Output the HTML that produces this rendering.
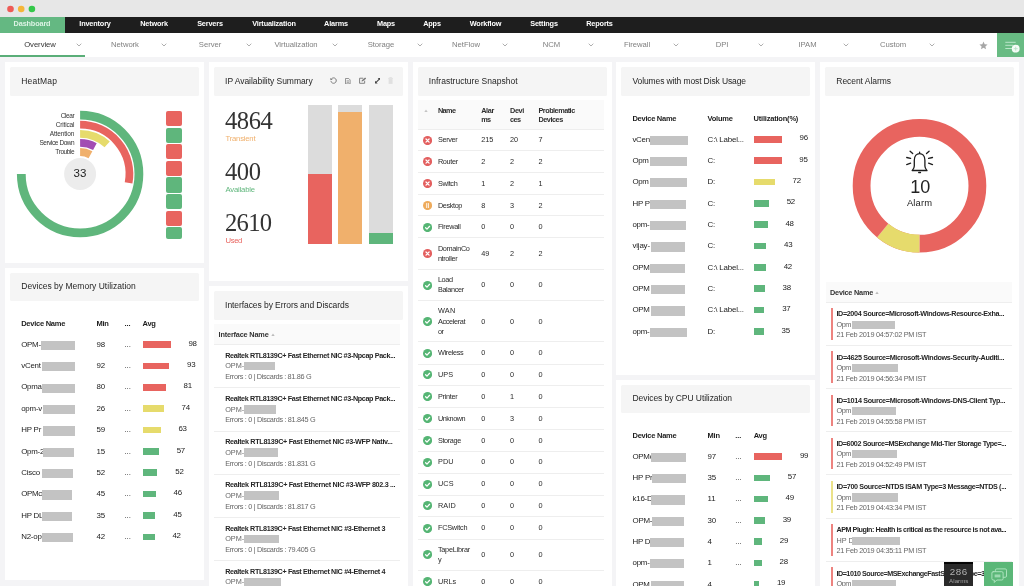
<!DOCTYPE html>
<html><head><meta charset="utf-8"><title>Dashboard</title>
<style>
html,body{margin:0;padding:0;}
body{width:1024px;height:586px;overflow:hidden;background:#f4f4f6;font-family:"Liberation Sans",sans-serif;position:relative;}
#r{position:absolute;left:0;top:0;width:1024px;height:586px;overflow:hidden;transform:translateZ(0);will-change:transform;}
#r div,#r span,#r svg{position:absolute;}
#r span{white-space:nowrap;line-height:1;}
</style></head><body><div id="r">
<div style="left:0px;top:0px;width:1024px;height:17px;background:#e7e7e7;"></div>
<svg style="left:0;top:0" width="50" height="17" viewBox="0 0 50 17"><circle cx="10.500" cy="9" r="3.300" fill="#ee5b56"/><circle cx="21.200" cy="9" r="3.300" fill="#f5b63a"/><circle cx="31.900" cy="9" r="3.300" fill="#35c84a"/></svg>
<div style="left:0px;top:17px;width:1024px;height:16px;background:#1e1e1e;"></div>
<div style="left:0px;top:17px;width:65px;height:16px;background:#64b882;"></div>
<span class="nv" style="left:-8px;top:20.3px;width:80px;text-align:center;font-size:7.3px;color:#dcf3e4;font-weight:bold;letter-spacing:-0.15px">Dashboard</span>
<span class="nv" style="left:55px;top:20.3px;width:80px;text-align:center;font-size:7.3px;color:#fff;font-weight:bold;letter-spacing:-0.15px">Inventory</span>
<span class="nv" style="left:114px;top:20.3px;width:80px;text-align:center;font-size:7.3px;color:#fff;font-weight:bold;letter-spacing:-0.15px">Network</span>
<span class="nv" style="left:170px;top:20.3px;width:80px;text-align:center;font-size:7.3px;color:#fff;font-weight:bold;letter-spacing:-0.15px">Servers</span>
<span class="nv" style="left:234px;top:20.3px;width:80px;text-align:center;font-size:7.3px;color:#fff;font-weight:bold;letter-spacing:-0.15px">Virtualization</span>
<span class="nv" style="left:296px;top:20.3px;width:80px;text-align:center;font-size:7.3px;color:#fff;font-weight:bold;letter-spacing:-0.15px">Alarms</span>
<span class="nv" style="left:346px;top:20.3px;width:80px;text-align:center;font-size:7.3px;color:#fff;font-weight:bold;letter-spacing:-0.15px">Maps</span>
<span class="nv" style="left:392px;top:20.3px;width:80px;text-align:center;font-size:7.3px;color:#fff;font-weight:bold;letter-spacing:-0.15px">Apps</span>
<span class="nv" style="left:445.5px;top:20.3px;width:80px;text-align:center;font-size:7.3px;color:#fff;font-weight:bold;letter-spacing:-0.15px">Workflow</span>
<span class="nv" style="left:504px;top:20.3px;width:80px;text-align:center;font-size:7.3px;color:#fff;font-weight:bold;letter-spacing:-0.15px">Settings</span>
<span class="nv" style="left:559.5px;top:20.3px;width:80px;text-align:center;font-size:7.3px;color:#fff;font-weight:bold;letter-spacing:-0.15px">Reports</span>
<div style="left:0px;top:33px;width:1024px;height:24px;background:#ffffff;"></div>
<div style="left:0px;top:55px;width:85px;height:2px;background:#5aae78;"></div>
<span style="left:0px;top:40.8px;width:80px;text-align:center;font-size:7.7px;color:#333;letter-spacing:-0.05px">Overview</span>
<svg style="left:76px;top:43px" width="6" height="4" viewBox="0 0 6 4"><path d="M0.7 0.7 L3 3 L5.3 0.7" fill="none" stroke="#999" stroke-width="0.8"/></svg>
<span style="left:85px;top:40.8px;width:80px;text-align:center;font-size:7.7px;color:#808080;letter-spacing:-0.05px">Network</span>
<svg style="left:161px;top:43px" width="6" height="4" viewBox="0 0 6 4"><path d="M0.7 0.7 L3 3 L5.3 0.7" fill="none" stroke="#999" stroke-width="0.8"/></svg>
<span style="left:170px;top:40.8px;width:80px;text-align:center;font-size:7.7px;color:#808080;letter-spacing:-0.05px">Server</span>
<svg style="left:246px;top:43px" width="6" height="4" viewBox="0 0 6 4"><path d="M0.7 0.7 L3 3 L5.3 0.7" fill="none" stroke="#999" stroke-width="0.8"/></svg>
<span style="left:256px;top:40.8px;width:80px;text-align:center;font-size:7.7px;color:#808080;letter-spacing:-0.05px">Virtualization</span>
<svg style="left:332px;top:43px" width="6" height="4" viewBox="0 0 6 4"><path d="M0.7 0.7 L3 3 L5.3 0.7" fill="none" stroke="#999" stroke-width="0.8"/></svg>
<span style="left:341px;top:40.8px;width:80px;text-align:center;font-size:7.7px;color:#808080;letter-spacing:-0.05px">Storage</span>
<svg style="left:417px;top:43px" width="6" height="4" viewBox="0 0 6 4"><path d="M0.7 0.7 L3 3 L5.3 0.7" fill="none" stroke="#999" stroke-width="0.8"/></svg>
<span style="left:426px;top:40.8px;width:80px;text-align:center;font-size:7.7px;color:#808080;letter-spacing:-0.05px">NetFlow</span>
<svg style="left:502px;top:43px" width="6" height="4" viewBox="0 0 6 4"><path d="M0.7 0.7 L3 3 L5.3 0.7" fill="none" stroke="#999" stroke-width="0.8"/></svg>
<span style="left:511.5px;top:40.8px;width:80px;text-align:center;font-size:7.7px;color:#808080;letter-spacing:-0.05px">NCM</span>
<svg style="left:587.5px;top:43px" width="6" height="4" viewBox="0 0 6 4"><path d="M0.7 0.7 L3 3 L5.3 0.7" fill="none" stroke="#999" stroke-width="0.8"/></svg>
<span style="left:597px;top:40.8px;width:80px;text-align:center;font-size:7.7px;color:#808080;letter-spacing:-0.05px">Firewall</span>
<svg style="left:673px;top:43px" width="6" height="4" viewBox="0 0 6 4"><path d="M0.7 0.7 L3 3 L5.3 0.7" fill="none" stroke="#999" stroke-width="0.8"/></svg>
<span style="left:682px;top:40.8px;width:80px;text-align:center;font-size:7.7px;color:#808080;letter-spacing:-0.05px">DPI</span>
<svg style="left:758px;top:43px" width="6" height="4" viewBox="0 0 6 4"><path d="M0.7 0.7 L3 3 L5.3 0.7" fill="none" stroke="#999" stroke-width="0.8"/></svg>
<span style="left:767.5px;top:40.8px;width:80px;text-align:center;font-size:7.7px;color:#808080;letter-spacing:-0.05px">IPAM</span>
<svg style="left:843px;top:43px" width="6" height="4" viewBox="0 0 6 4"><path d="M0.7 0.7 L3 3 L5.3 0.7" fill="none" stroke="#999" stroke-width="0.8"/></svg>
<span style="left:853px;top:40.8px;width:80px;text-align:center;font-size:7.7px;color:#808080;letter-spacing:-0.05px">Custom</span>
<svg style="left:929px;top:43px" width="6" height="4" viewBox="0 0 6 4"><path d="M0.7 0.7 L3 3 L5.3 0.7" fill="none" stroke="#999" stroke-width="0.8"/></svg>
<svg style="left:979.3px;top:40.8px" width="9" height="9" viewBox="0 0 24 24"><path fill="#a6a6a6" d="M12 1.500l3.100 7.200 7.800.700-5.900 5.200 1.800 7.600L12 18.100l-6.800 4.100 1.800-7.600L1.100 9.400l7.800-.7z"/></svg>
<div style="left:997.3px;top:33px;width:26.7px;height:24px;background:#68bb83;"></div>
<svg style="left:1003px;top:39px" width="18" height="15" viewBox="1003 39 18 15"><path d="M1005.300 42.300H1015.700M1005.300 45.300H1013M1005.300 48.500H1012" stroke="#c4ebd1" stroke-width="0.9" fill="none"/><circle cx="1015.700" cy="48.700" r="3.900" fill="#f4fbf6"/><path d="M1015.700 46.700v4M1013.700 48.700h4" stroke="#b9e2c6" stroke-width="0.9"/></svg>
<div style="left:5px;top:62px;width:199px;height:200.5px;background:#fff;"></div>
<div style="left:10px;top:67px;width:189px;height:28.6px;background:#f5f5f5;border-radius:1.5px"></div>
<span style="left:21.30px;top:76.8px;font-size:8.5px;color:#1f1f1f;letter-spacing:0.180px;">HeatMap</span>
<div style="left:5px;top:267.5px;width:199px;height:312.3px;background:#fff;"></div>
<div style="left:10px;top:272.5px;width:189px;height:28.6px;background:#f5f5f5;border-radius:1.5px"></div>
<span style="left:21.30px;top:282.3px;font-size:8.5px;color:#1f1f1f;letter-spacing:0.023px;">Devices by Memory Utilization</span>
<div style="left:208.8px;top:62px;width:199.2px;height:219px;background:#fff;"></div>
<div style="left:213.8px;top:67px;width:189.2px;height:28.6px;background:#f5f5f5;border-radius:1.5px"></div>
<span style="left:225.10px;top:76.8px;font-size:8.5px;color:#1f1f1f;letter-spacing:-0.043px;">IP Availability Summary</span>
<div style="left:208.8px;top:286px;width:199.2px;height:310px;background:#fff;"></div>
<div style="left:213.8px;top:291px;width:189.2px;height:28.6px;background:#f5f5f5;border-radius:1.5px"></div>
<span style="left:225.10px;top:300.8px;font-size:8.5px;color:#1f1f1f;letter-spacing:-0.072px;">Interfaces by Errors and Discards</span>
<div style="left:412.5px;top:62px;width:199.3px;height:530px;background:#fff;"></div>
<div style="left:417.5px;top:67px;width:189.3px;height:28.6px;background:#f5f5f5;border-radius:1.5px"></div>
<span style="left:428.80px;top:76.8px;font-size:8.5px;color:#1f1f1f;letter-spacing:0.018px;">Infrastructure Snapshot</span>
<div style="left:616.2px;top:62px;width:199.3px;height:312.5px;background:#fff;"></div>
<div style="left:621.2px;top:67px;width:189.3px;height:28.6px;background:#f5f5f5;border-radius:1.5px"></div>
<span style="left:632.50px;top:76.8px;font-size:8.5px;color:#1f1f1f;letter-spacing:-0.117px;">Volumes with most Disk Usage</span>
<div style="left:616.2px;top:379.5px;width:199.3px;height:220px;background:#fff;"></div>
<div style="left:621.2px;top:384.5px;width:189.3px;height:28.6px;background:#f5f5f5;border-radius:1.5px"></div>
<span style="left:632.50px;top:394.3px;font-size:8.5px;color:#1f1f1f;letter-spacing:-0.061px;">Devices by CPU Utilization</span>
<div style="left:820px;top:62px;width:199.3px;height:530px;background:#fff;"></div>
<div style="left:825px;top:67px;width:189.3px;height:28.6px;background:#f5f5f5;border-radius:1.5px"></div>
<span style="left:836.30px;top:76.8px;font-size:8.5px;color:#1f1f1f;letter-spacing:-0.051px;">Recent Alarms</span>
<svg style="left:0;top:100px" width="204" height="160" viewBox="0 100 204 160"><path d="M80.1 115.2 A58.8 58.8 0 1 1 21.30 174.00" fill="none" stroke="#5fb67c" stroke-width="8.8"/><path d="M80.1 124.7 A49.3 49.3 0 0 1 128.59 182.90" fill="none" stroke="#e8645f" stroke-width="7.8"/><path d="M80.1 133.9 A40.1 40.1 0 0 1 107.19 144.44" fill="none" stroke="#e6db6c" stroke-width="7.8"/><path d="M80.1 142.9 A31.1 31.1 0 0 1 94.89 146.64" fill="none" stroke="#a24db3" stroke-width="7.6"/><path d="M80.1 152.1 A21.9 21.9 0 0 1 90.48 154.72" fill="none" stroke="#f0b06c" stroke-width="8"/><circle cx="80.1" cy="174" r="16" fill="#ececec"/></svg>
<span style="left:73.60px;top:168.4px;font-size:11.5px;color:#222;letter-spacing:0.105px;">33</span>
<span style="left:60.80px;top:112.6px;font-size:6.5px;color:#333;letter-spacing:-0.406px;">Clear</span>
<span style="left:55.80px;top:121.75px;font-size:6.5px;color:#333;letter-spacing:-0.170px;">Critical</span>
<span style="left:49.70px;top:130.9px;font-size:6.5px;color:#333;letter-spacing:-0.117px;">Attention</span>
<span style="left:39.40px;top:140.05px;font-size:6.5px;color:#333;letter-spacing:-0.433px;">Service Down</span>
<span style="left:55.30px;top:149.2px;font-size:6.5px;color:#333;letter-spacing:-0.399px;">Trouble</span>
<div style="left:165.9px;top:111.00px;width:16.1px;height:15.2px;border-radius:2px;background:#e8645f"></div>
<div style="left:165.9px;top:127.62px;width:16.1px;height:15.2px;border-radius:2px;background:#5fb67c"></div>
<div style="left:165.9px;top:144.24px;width:16.1px;height:15.2px;border-radius:2px;background:#e8645f"></div>
<div style="left:165.9px;top:160.86px;width:16.1px;height:15.2px;border-radius:2px;background:#e8645f"></div>
<div style="left:165.9px;top:177.48px;width:16.1px;height:15.2px;border-radius:2px;background:#5fb67c"></div>
<div style="left:165.9px;top:194.10px;width:16.1px;height:15.2px;border-radius:2px;background:#5fb67c"></div>
<div style="left:165.9px;top:210.72px;width:16.1px;height:15.2px;border-radius:2px;background:#e8645f"></div>
<div style="left:165.9px;top:227.34px;width:16.1px;height:11.3px;border-radius:2px;background:#5fb67c"></div>
<div style="left:307.8px;top:105px;width:24.2px;height:139px;background:#dcdcdc;"></div>
<div style="left:307.8px;top:173.6px;width:24.2px;height:70.4px;background:#e8645f;"></div>
<div style="left:338px;top:105px;width:24.2px;height:139px;background:#dcdcdc;"></div>
<div style="left:338px;top:112px;width:24.2px;height:132px;background:#f0b06c;"></div>
<div style="left:368.8px;top:105px;width:24.2px;height:139px;background:#dcdcdc;"></div>
<div style="left:368.8px;top:233px;width:24.2px;height:11px;background:#5fb67c;"></div>
<span style="left:225.00px;top:108.5px;font-size:24.6px;color:#333;letter-spacing:-0.450px;font-family:'Liberation Serif',serif;">4864</span>
<span style="left:225.50px;top:134.6px;font-size:7.7px;color:#f0b06c;letter-spacing:-0.212px;">Transient</span>
<span style="left:225.00px;top:159.5px;font-size:24.6px;color:#333;letter-spacing:-0.467px;font-family:'Liberation Serif',serif;">400</span>
<span style="left:225.50px;top:185.6px;font-size:7.7px;color:#5fb67c;letter-spacing:-0.190px;">Available</span>
<span style="left:225.00px;top:210.5px;font-size:24.6px;color:#333;letter-spacing:-0.700px;font-family:'Liberation Serif',serif;">2610</span>
<span style="left:225.50px;top:236.6px;font-size:7.7px;color:#e8645f;letter-spacing:-0.369px;">Used</span>
<svg style="left:329.8px;top:77.4px" width="7.2" height="7.2" viewBox="0 0 8 8"><path d="M1.500 2.300 A3 3 0 1 1 1.050 4.600" fill="none" stroke="#7a7a7a" stroke-width="1.1"/><path d="M0.200 1 L0.500 3.600 L3 2.900z" fill="#7a7a7a"/></svg>
<svg style="left:345.2px;top:77.800px" width="5.6" height="6.4" viewBox="0 0 7 8"><path d="M0.600 0.600 H4.600 L6.400 2.400 V7.400 H0.600z" fill="none" stroke="#7a7a7a" stroke-width="1"/><path d="M2 3.600 H5 M2 5.400 H5" stroke="#7a7a7a" stroke-width="0.9"/></svg>
<svg style="left:358.8px;top:77.300px" width="7.6" height="7" viewBox="0 0 9 8"><path d="M5 1.300 H0.700 V7.300 H6.700 V4.200" fill="none" stroke="#7a7a7a" stroke-width="1.1"/><path d="M3 5.300 L3.300 3.700 L7.200 0.300 L8.500 1.700 L4.600 5z" fill="#7a7a7a"/></svg>
<svg style="left:374.6px;top:78.300px" width="5.4" height="5.4" viewBox="0 0 6 6"><path d="M3 0 H6 V3z M0 3 V6 H3z" fill="#444"/><path d="M1.200 4.800 L4.800 1.200" stroke="#444" stroke-width="1.2"/></svg>
<svg style="left:388.2px;top:77.300px" width="5.2" height="7.2" viewBox="0 0 6 8"><path d="M0.200 1.500 H5.800 M2 1.300 V0.400 H4 V1.300" stroke="#dcdcdc" stroke-width="0.9" fill="none"/><path d="M0.700 2.200 H5.300 V7.800 H0.700z" fill="#e0e0e0"/></svg>
<span style="left:21.20px;top:319.90000000000003px;font-size:7.5px;color:#1c1c1c;letter-spacing:-0.255px;font-weight:bold;">Device Name</span>
<span style="left:96.50px;top:319.90000000000003px;font-size:7.5px;color:#1c1c1c;letter-spacing:-0.258px;font-weight:bold;">Min</span>
<span style="left:124.50px;top:319.90000000000003px;font-size:7.5px;color:#1c1c1c;letter-spacing:-0.125px;font-weight:bold;">...</span>
<span style="left:142.60px;top:319.90000000000003px;font-size:7.5px;color:#1c1c1c;letter-spacing:-0.278px;font-weight:bold;">Avg</span>
<span style="left:21.20px;top:340.70000000000005px;font-size:7.9px;color:#222;letter-spacing:-0.258px;">OPM-</span>
<div style="left:41.3px;top:340.8px;width:34.2px;height:9.2px;background:#c3c3c3;"></div>
<span style="left:96.50px;top:340.70000000000005px;font-size:7.9px;color:#222;letter-spacing:-0.220px;">98</span>
<span style="left:124.50px;top:340.70000000000005px;font-size:7.9px;color:#222;letter-spacing:-0.110px;">...</span>
<div style="left:142.6px;top:341.20000000000005px;width:27.9986px;height:6.6px;background:#e8645f;"></div>
<span style="left:188.40px;top:339.6px;font-size:7.9px;color:#222;letter-spacing:-0.220px;">98</span>
<span style="left:21.20px;top:362.08000000000004px;font-size:7.9px;color:#222;letter-spacing:-0.206px;">vCent</span>
<div style="left:41.8px;top:362.18px;width:33.2px;height:9.2px;background:#c3c3c3;"></div>
<span style="left:96.50px;top:362.08000000000004px;font-size:7.9px;color:#222;letter-spacing:-0.220px;">92</span>
<span style="left:124.50px;top:362.08000000000004px;font-size:7.9px;color:#222;letter-spacing:-0.110px;">...</span>
<div style="left:142.6px;top:362.58000000000004px;width:26.5701px;height:6.6px;background:#e8645f;"></div>
<span style="left:186.97px;top:360.98px;font-size:7.9px;color:#222;letter-spacing:-0.220px;">93</span>
<span style="left:21.20px;top:383.46000000000004px;font-size:7.9px;color:#222;letter-spacing:-0.269px;">Opma</span>
<div style="left:41.8px;top:383.56px;width:33.2px;height:9.2px;background:#c3c3c3;"></div>
<span style="left:96.50px;top:383.46000000000004px;font-size:7.9px;color:#222;letter-spacing:-0.220px;">80</span>
<span style="left:124.50px;top:383.46000000000004px;font-size:7.9px;color:#222;letter-spacing:-0.110px;">...</span>
<div style="left:142.6px;top:383.96000000000004px;width:23.1417px;height:6.6px;background:#e8645f;"></div>
<span style="left:183.54px;top:382.36px;font-size:7.9px;color:#222;letter-spacing:-0.220px;">81</span>
<span style="left:21.20px;top:404.84000000000003px;font-size:7.9px;color:#222;letter-spacing:-0.219px;">opm-v</span>
<div style="left:42.5px;top:404.94px;width:32.0px;height:9.2px;background:#c3c3c3;"></div>
<span style="left:96.50px;top:404.84000000000003px;font-size:7.9px;color:#222;letter-spacing:-0.220px;">26</span>
<span style="left:124.50px;top:404.84000000000003px;font-size:7.9px;color:#222;letter-spacing:-0.110px;">...</span>
<div style="left:142.6px;top:405.34000000000003px;width:21.1418px;height:6.6px;background:#e6db6c;"></div>
<span style="left:181.54px;top:403.74px;font-size:7.9px;color:#222;letter-spacing:-0.220px;">74</span>
<span style="left:21.20px;top:426.22px;font-size:7.9px;color:#222;letter-spacing:-0.209px;">HP Pr</span>
<div style="left:42.5px;top:426.32px;width:32.0px;height:9.2px;background:#c3c3c3;"></div>
<span style="left:96.50px;top:426.22px;font-size:7.9px;color:#222;letter-spacing:-0.220px;">59</span>
<span style="left:124.50px;top:426.22px;font-size:7.9px;color:#222;letter-spacing:-0.110px;">...</span>
<div style="left:142.6px;top:426.72px;width:17.999100000000002px;height:6.6px;background:#e6db6c;"></div>
<span style="left:178.40px;top:425.12px;font-size:7.9px;color:#222;letter-spacing:-0.220px;">63</span>
<span style="left:21.20px;top:447.6px;font-size:7.9px;color:#222;letter-spacing:-0.241px;">Opm-2</span>
<div style="left:42.8px;top:447.7px;width:31.0px;height:9.2px;background:#c3c3c3;"></div>
<span style="left:96.50px;top:447.6px;font-size:7.9px;color:#222;letter-spacing:-0.220px;">15</span>
<span style="left:124.50px;top:447.6px;font-size:7.9px;color:#222;letter-spacing:-0.110px;">...</span>
<div style="left:142.6px;top:448.1px;width:16.2849px;height:6.6px;background:#5fb67c;"></div>
<span style="left:176.68px;top:446.5px;font-size:7.9px;color:#222;letter-spacing:-0.220px;">57</span>
<span style="left:21.20px;top:468.98px;font-size:7.9px;color:#222;letter-spacing:-0.183px;">Cisco </span>
<div style="left:41.6px;top:469.08px;width:31.699999999999996px;height:9.2px;background:#c3c3c3;"></div>
<span style="left:96.50px;top:468.98px;font-size:7.9px;color:#222;letter-spacing:-0.220px;">52</span>
<span style="left:124.50px;top:468.98px;font-size:7.9px;color:#222;letter-spacing:-0.110px;">...</span>
<div style="left:142.6px;top:469.48px;width:14.8564px;height:6.6px;background:#5fb67c;"></div>
<span style="left:175.26px;top:467.88px;font-size:7.9px;color:#222;letter-spacing:-0.220px;">52</span>
<span style="left:21.20px;top:490.36px;font-size:7.9px;color:#222;letter-spacing:-0.274px;">OPMc</span>
<div style="left:41.6px;top:490.46px;width:30.499999999999993px;height:9.2px;background:#c3c3c3;"></div>
<span style="left:96.50px;top:490.36px;font-size:7.9px;color:#222;letter-spacing:-0.220px;">45</span>
<span style="left:124.50px;top:490.36px;font-size:7.9px;color:#222;letter-spacing:-0.110px;">...</span>
<div style="left:142.6px;top:490.86px;width:13.1422px;height:6.6px;background:#5fb67c;"></div>
<span style="left:173.54px;top:489.26px;font-size:7.9px;color:#222;letter-spacing:-0.220px;">46</span>
<span style="left:21.20px;top:511.74px;font-size:7.9px;color:#222;letter-spacing:-0.231px;">HP DL</span>
<div style="left:41.6px;top:511.84px;width:30.300000000000004px;height:9.2px;background:#c3c3c3;"></div>
<span style="left:96.50px;top:511.74px;font-size:7.9px;color:#222;letter-spacing:-0.220px;">35</span>
<span style="left:124.50px;top:511.74px;font-size:7.9px;color:#222;letter-spacing:-0.110px;">...</span>
<div style="left:142.6px;top:512.24px;width:12.8565px;height:6.6px;background:#5fb67c;"></div>
<span style="left:173.26px;top:510.64px;font-size:7.9px;color:#222;letter-spacing:-0.220px;">45</span>
<span style="left:21.20px;top:533.12px;font-size:7.9px;color:#222;letter-spacing:-0.215px;">N2-op</span>
<div style="left:41.6px;top:533.22px;width:31.300000000000004px;height:9.2px;background:#c3c3c3;"></div>
<span style="left:96.50px;top:533.12px;font-size:7.9px;color:#222;letter-spacing:-0.220px;">42</span>
<span style="left:124.50px;top:533.12px;font-size:7.9px;color:#222;letter-spacing:-0.110px;">...</span>
<div style="left:142.6px;top:533.62px;width:11.9994px;height:6.6px;background:#5fb67c;"></div>
<span style="left:172.40px;top:532.02px;font-size:7.9px;color:#222;letter-spacing:-0.220px;">42</span>
<span style="left:632.40px;top:114.7px;font-size:7.5px;color:#1c1c1c;letter-spacing:-0.255px;font-weight:bold;">Device Name</span>
<span style="left:707.60px;top:114.7px;font-size:7.5px;color:#1c1c1c;letter-spacing:-0.265px;font-weight:bold;">Volume</span>
<span style="left:753.50px;top:114.7px;font-size:7.5px;color:#1c1c1c;letter-spacing:-0.204px;font-weight:bold;">Utilization(%)</span>
<span style="left:632.40px;top:135.5px;font-size:7.9px;color:#222;letter-spacing:-0.231px;">vCen</span>
<div style="left:649.5px;top:135.6px;width:38.200000000000045px;height:9.2px;background:#c3c3c3;"></div>
<span style="left:707.60px;top:135.5px;font-size:7.9px;color:#222;letter-spacing:-0.159px;">C:\ Label...</span>
<div style="left:753.5px;top:136.0px;width:28.32px;height:6.6px;background:#e8645f;"></div>
<span style="left:799.62px;top:134.4px;font-size:7.9px;color:#222;letter-spacing:-0.220px;">96</span>
<span style="left:632.40px;top:156.85px;font-size:7.9px;color:#222;letter-spacing:-0.285px;">Opm</span>
<div style="left:649.5px;top:156.95px;width:37.5px;height:9.2px;background:#c3c3c3;"></div>
<span style="left:707.60px;top:156.85px;font-size:7.9px;color:#222;letter-spacing:-0.198px;">C:</span>
<div style="left:753.5px;top:157.35px;width:28.025px;height:6.6px;background:#e8645f;"></div>
<span style="left:799.32px;top:155.75px;font-size:7.9px;color:#222;letter-spacing:-0.220px;">95</span>
<span style="left:632.40px;top:178.20000000000002px;font-size:7.9px;color:#222;letter-spacing:-0.285px;">Opm</span>
<div style="left:649.5px;top:178.3px;width:37.5px;height:9.2px;background:#c3c3c3;"></div>
<span style="left:707.60px;top:178.20000000000002px;font-size:7.9px;color:#222;letter-spacing:-0.198px;">D:</span>
<div style="left:753.5px;top:178.70000000000002px;width:21.24px;height:6.6px;background:#e6db6c;"></div>
<span style="left:792.54px;top:177.10000000000002px;font-size:7.9px;color:#222;letter-spacing:-0.220px;">72</span>
<span style="left:632.40px;top:199.55px;font-size:7.9px;color:#222;letter-spacing:-0.201px;">HP Pi</span>
<div style="left:650.2px;top:199.65px;width:36.299999999999955px;height:9.2px;background:#c3c3c3;"></div>
<span style="left:707.60px;top:199.55px;font-size:7.9px;color:#222;letter-spacing:-0.198px;">C:</span>
<div style="left:753.5px;top:200.05px;width:15.34px;height:6.6px;background:#5fb67c;"></div>
<span style="left:786.64px;top:198.45000000000002px;font-size:7.9px;color:#222;letter-spacing:-0.220px;">52</span>
<span style="left:632.40px;top:220.9px;font-size:7.9px;color:#222;letter-spacing:-0.225px;">opm-</span>
<div style="left:649.5px;top:221.0px;width:36.299999999999955px;height:9.2px;background:#c3c3c3;"></div>
<span style="left:707.60px;top:220.9px;font-size:7.9px;color:#222;letter-spacing:-0.198px;">C:</span>
<div style="left:753.5px;top:221.4px;width:14.16px;height:6.6px;background:#5fb67c;"></div>
<span style="left:785.46px;top:219.8px;font-size:7.9px;color:#222;letter-spacing:-0.220px;">48</span>
<span style="left:632.40px;top:242.25px;font-size:7.9px;color:#222;letter-spacing:-0.154px;">vijay-</span>
<div style="left:650.6px;top:242.35px;width:34.69999999999993px;height:9.2px;background:#c3c3c3;"></div>
<span style="left:707.60px;top:242.25px;font-size:7.9px;color:#222;letter-spacing:-0.198px;">C:</span>
<div style="left:753.5px;top:242.75px;width:12.684999999999999px;height:6.6px;background:#5fb67c;"></div>
<span style="left:783.98px;top:241.15px;font-size:7.9px;color:#222;letter-spacing:-0.220px;">43</span>
<span style="left:632.40px;top:263.6px;font-size:7.9px;color:#222;letter-spacing:-0.300px;">OPM</span>
<div style="left:650px;top:263.7px;width:35.299999999999955px;height:9.2px;background:#c3c3c3;"></div>
<span style="left:707.60px;top:263.6px;font-size:7.9px;color:#222;letter-spacing:-0.159px;">C:\ Label...</span>
<div style="left:753.5px;top:264.1px;width:12.389999999999999px;height:6.6px;background:#5fb67c;"></div>
<span style="left:783.69px;top:262.5px;font-size:7.9px;color:#222;letter-spacing:-0.220px;">42</span>
<span style="left:632.40px;top:284.95000000000005px;font-size:7.9px;color:#222;letter-spacing:-0.300px;">OPM</span>
<div style="left:650.6px;top:285.05px;width:34.69999999999993px;height:9.2px;background:#c3c3c3;"></div>
<span style="left:707.60px;top:284.95000000000005px;font-size:7.9px;color:#222;letter-spacing:-0.198px;">C:</span>
<div style="left:753.5px;top:285.45000000000005px;width:11.209999999999999px;height:6.6px;background:#5fb67c;"></div>
<span style="left:782.51px;top:283.85px;font-size:7.9px;color:#222;letter-spacing:-0.220px;">38</span>
<span style="left:632.40px;top:306.30000000000007px;font-size:7.9px;color:#222;letter-spacing:-0.300px;">OPM</span>
<div style="left:650.6px;top:306.40000000000003px;width:34.69999999999993px;height:9.2px;background:#c3c3c3;"></div>
<span style="left:707.60px;top:306.30000000000007px;font-size:7.9px;color:#222;letter-spacing:-0.159px;">C:\ Label...</span>
<div style="left:753.5px;top:306.80000000000007px;width:10.915px;height:6.6px;background:#5fb67c;"></div>
<span style="left:782.21px;top:305.20000000000005px;font-size:7.9px;color:#222;letter-spacing:-0.220px;">37</span>
<span style="left:632.40px;top:327.65000000000003px;font-size:7.9px;color:#222;letter-spacing:-0.225px;">opm-</span>
<div style="left:649.5px;top:327.75px;width:37.0px;height:9.2px;background:#c3c3c3;"></div>
<span style="left:707.60px;top:327.65000000000003px;font-size:7.9px;color:#222;letter-spacing:-0.198px;">D:</span>
<div style="left:753.5px;top:328.15000000000003px;width:10.325px;height:6.6px;background:#5fb67c;"></div>
<span style="left:781.62px;top:326.55px;font-size:7.9px;color:#222;letter-spacing:-0.220px;">35</span>
<span style="left:632.50px;top:431.90000000000003px;font-size:7.5px;color:#1c1c1c;letter-spacing:-0.255px;font-weight:bold;">Device Name</span>
<span style="left:707.60px;top:431.90000000000003px;font-size:7.5px;color:#1c1c1c;letter-spacing:-0.258px;font-weight:bold;">Min</span>
<span style="left:735.30px;top:431.90000000000003px;font-size:7.5px;color:#1c1c1c;letter-spacing:-0.125px;font-weight:bold;">...</span>
<span style="left:753.70px;top:431.90000000000003px;font-size:7.5px;color:#1c1c1c;letter-spacing:-0.278px;font-weight:bold;">Avg</span>
<span style="left:632.50px;top:452.70000000000005px;font-size:7.9px;color:#222;letter-spacing:-0.274px;">OPMc</span>
<div style="left:651.4px;top:452.8px;width:34.60000000000002px;height:9.2px;background:#c3c3c3;"></div>
<span style="left:707.60px;top:452.70000000000005px;font-size:7.9px;color:#222;letter-spacing:-0.220px;">97</span>
<span style="left:735.30px;top:452.70000000000005px;font-size:7.9px;color:#222;letter-spacing:-0.110px;">...</span>
<div style="left:753.7px;top:453.20000000000005px;width:28.412999999999997px;height:6.6px;background:#e8645f;"></div>
<span style="left:799.91px;top:451.6px;font-size:7.9px;color:#222;letter-spacing:-0.220px;">99</span>
<span style="left:632.50px;top:474.00000000000006px;font-size:7.9px;color:#222;letter-spacing:-0.209px;">HP Pr</span>
<div style="left:651.8px;top:474.1px;width:34.200000000000045px;height:9.2px;background:#c3c3c3;"></div>
<span style="left:707.60px;top:474.00000000000006px;font-size:7.9px;color:#222;letter-spacing:-0.220px;">35</span>
<span style="left:735.30px;top:474.00000000000006px;font-size:7.9px;color:#222;letter-spacing:-0.110px;">...</span>
<div style="left:753.7px;top:474.50000000000006px;width:16.358999999999998px;height:6.6px;background:#5fb67c;"></div>
<span style="left:787.86px;top:472.90000000000003px;font-size:7.9px;color:#222;letter-spacing:-0.220px;">57</span>
<span style="left:632.50px;top:495.30000000000007px;font-size:7.9px;color:#222;letter-spacing:-0.211px;">k16-D</span>
<div style="left:651.4px;top:495.40000000000003px;width:33.39999999999998px;height:9.2px;background:#c3c3c3;"></div>
<span style="left:707.60px;top:495.30000000000007px;font-size:7.9px;color:#222;letter-spacing:-0.205px;">11</span>
<span style="left:735.30px;top:495.30000000000007px;font-size:7.9px;color:#222;letter-spacing:-0.110px;">...</span>
<div style="left:753.7px;top:495.80000000000007px;width:14.062999999999999px;height:6.6px;background:#5fb67c;"></div>
<span style="left:785.56px;top:494.20000000000005px;font-size:7.9px;color:#222;letter-spacing:-0.220px;">49</span>
<span style="left:632.50px;top:516.6px;font-size:7.9px;color:#222;letter-spacing:-0.258px;">OPM-</span>
<div style="left:651.8px;top:516.7px;width:32.5px;height:9.2px;background:#c3c3c3;"></div>
<span style="left:707.60px;top:516.6px;font-size:7.9px;color:#222;letter-spacing:-0.220px;">30</span>
<span style="left:735.30px;top:516.6px;font-size:7.9px;color:#222;letter-spacing:-0.110px;">...</span>
<div style="left:753.7px;top:517.1px;width:11.193px;height:6.6px;background:#5fb67c;"></div>
<span style="left:782.69px;top:515.5px;font-size:7.9px;color:#222;letter-spacing:-0.220px;">39</span>
<span style="left:632.50px;top:537.9000000000001px;font-size:7.9px;color:#222;letter-spacing:-0.234px;">HP D</span>
<div style="left:650.2px;top:538.0000000000001px;width:34.09999999999991px;height:9.2px;background:#c3c3c3;"></div>
<span style="left:707.60px;top:537.9000000000001px;font-size:7.9px;color:#222;letter-spacing:-0.220px;">4</span>
<span style="left:735.30px;top:537.9000000000001px;font-size:7.9px;color:#222;letter-spacing:-0.110px;">...</span>
<div style="left:753.7px;top:538.4000000000001px;width:8.322999999999999px;height:6.6px;background:#5fb67c;"></div>
<span style="left:779.82px;top:536.8000000000001px;font-size:7.9px;color:#222;letter-spacing:-0.220px;">29</span>
<span style="left:632.50px;top:559.2px;font-size:7.9px;color:#222;letter-spacing:-0.225px;">opm-</span>
<div style="left:649.5px;top:559.3000000000001px;width:34.39999999999998px;height:9.2px;background:#c3c3c3;"></div>
<span style="left:707.60px;top:559.2px;font-size:7.9px;color:#222;letter-spacing:-0.220px;">1</span>
<span style="left:735.30px;top:559.2px;font-size:7.9px;color:#222;letter-spacing:-0.110px;">...</span>
<div style="left:753.7px;top:559.7px;width:8.036px;height:6.6px;background:#5fb67c;"></div>
<span style="left:779.54px;top:558.1px;font-size:7.9px;color:#222;letter-spacing:-0.220px;">28</span>
<span style="left:632.50px;top:580.5000000000001px;font-size:7.9px;color:#222;letter-spacing:-0.300px;">OPM</span>
<div style="left:650.6px;top:580.6000000000001px;width:33.299999999999955px;height:9.2px;background:#c3c3c3;"></div>
<span style="left:707.60px;top:580.5000000000001px;font-size:7.9px;color:#222;letter-spacing:-0.220px;">4</span>
<span style="left:735.30px;top:580.5000000000001px;font-size:7.9px;color:#222;letter-spacing:-0.110px;">...</span>
<div style="left:753.7px;top:581.0000000000001px;width:5.452999999999999px;height:6.6px;background:#5fb67c;"></div>
<span style="left:776.95px;top:579.4000000000001px;font-size:7.9px;color:#222;letter-spacing:-0.220px;">19</span>
<div style="left:214.3px;top:324.3px;width:185.7px;height:19.6px;background:#fafafa;"></div>
<span style="left:218.60px;top:330.7px;font-size:7.3px;color:#333;letter-spacing:-0.167px;font-weight:bold;">Interface Name</span>
<svg style="left:270.5px;top:332.5px" width="4" height="4" viewBox="0 0 4 4"><path d="M0.300 3 L2 0.6 L3.700 3z" fill="#bbb"/></svg>
<span style="left:225.20px;top:351.87px;font-size:7.2px;color:#262626;letter-spacing:-0.355px;font-weight:bold;">Realtek RTL8139C+ Fast Ethernet NIC #3-Npcap Pack...</span>
<span style="left:225.20px;top:362.42px;font-size:7.3px;color:#666;letter-spacing:0.003px;">OPM-</span>
<div style="left:243.6px;top:361.9px;width:31.799999999999983px;height:8.6px;background:#c3c3c3;"></div>
<span style="left:225.20px;top:373.32px;font-size:7.3px;color:#666;letter-spacing:-0.333px;">Errors : 0 | Discards : 81.86 G</span>
<div style="left:214.3px;top:387.4px;width:185.7px;height:0.8px;background:#eeeeee;"></div>
<span style="left:225.20px;top:395.04px;font-size:7.2px;color:#262626;letter-spacing:-0.355px;font-weight:bold;">Realtek RTL8139C+ Fast Ethernet NIC #3-Npcap Pack...</span>
<span style="left:225.20px;top:405.59px;font-size:7.3px;color:#666;letter-spacing:0.003px;">OPM-</span>
<div style="left:243.6px;top:405.07px;width:32.099999999999994px;height:8.6px;background:#c3c3c3;"></div>
<span style="left:225.20px;top:416.49px;font-size:7.3px;color:#666;letter-spacing:-0.323px;">Errors : 0 | Discards : 81.845 G</span>
<div style="left:214.3px;top:430.57px;width:185.7px;height:0.8px;background:#eeeeee;"></div>
<span style="left:225.20px;top:438.21px;font-size:7.2px;color:#262626;letter-spacing:-0.300px;font-weight:bold;">Realtek RTL8139C+ Fast Ethernet NIC #3-WFP Nativ...</span>
<span style="left:225.20px;top:448.76px;font-size:7.3px;color:#666;letter-spacing:0.003px;">OPM-</span>
<div style="left:243.6px;top:448.24px;width:34.20000000000002px;height:8.6px;background:#c3c3c3;"></div>
<span style="left:225.20px;top:459.66px;font-size:7.3px;color:#666;letter-spacing:-0.323px;">Errors : 0 | Discards : 81.831 G</span>
<div style="left:214.3px;top:473.74px;width:185.7px;height:0.8px;background:#eeeeee;"></div>
<span style="left:225.20px;top:481.38px;font-size:7.2px;color:#262626;letter-spacing:-0.296px;font-weight:bold;">Realtek RTL8139C+ Fast Ethernet NIC #3-WFP 802.3 ...</span>
<span style="left:225.20px;top:491.93px;font-size:7.3px;color:#666;letter-spacing:0.003px;">OPM-</span>
<div style="left:243.6px;top:491.40999999999997px;width:35.900000000000006px;height:8.6px;background:#c3c3c3;"></div>
<span style="left:225.20px;top:502.83px;font-size:7.3px;color:#666;letter-spacing:-0.323px;">Errors : 0 | Discards : 81.817 G</span>
<div style="left:214.3px;top:516.91px;width:185.7px;height:0.8px;background:#eeeeee;"></div>
<span style="left:225.20px;top:524.55px;font-size:7.2px;color:#262626;letter-spacing:-0.341px;font-weight:bold;">Realtek RTL8139C+ Fast Ethernet NIC #3-Ethernet 3</span>
<span style="left:225.20px;top:535.1px;font-size:7.3px;color:#666;letter-spacing:0.003px;">OPM-</span>
<div style="left:243.6px;top:534.5799999999999px;width:35.900000000000006px;height:8.6px;background:#c3c3c3;"></div>
<span style="left:225.20px;top:546.0px;font-size:7.3px;color:#666;letter-spacing:-0.323px;">Errors : 0 | Discards : 79.405 G</span>
<div style="left:214.3px;top:560.0799999999999px;width:185.7px;height:0.8px;background:#eeeeee;"></div>
<span style="left:225.20px;top:567.72px;font-size:7.2px;color:#262626;letter-spacing:-0.341px;font-weight:bold;">Realtek RTL8139C+ Fast Ethernet NIC #4-Ethernet 4</span>
<span style="left:225.20px;top:578.27px;font-size:7.3px;color:#666;letter-spacing:0.003px;">OPM-</span>
<div style="left:243.6px;top:577.75px;width:37.099999999999994px;height:8.6px;background:#c3c3c3;"></div>
<span style="left:225.20px;top:589.17px;font-size:7.3px;color:#666;letter-spacing:-0.345px;">Errors : 0 | Discards : 79.3 G</span>
<div style="left:214.3px;top:603.25px;width:185.7px;height:0.8px;background:#eeeeee;"></div>
<div style="left:214.3px;top:343.7px;width:185.7px;height:0.8px;background:#eeeeee;"></div>
<div style="left:418.4px;top:100.4px;width:185.4px;height:28.6px;background:#fafafa;"></div>
<svg style="left:424px;top:108.5px" width="4" height="4" viewBox="0 0 4 4"><path d="M0.300 3 L2 0.6 L3.700 3z" fill="#c4c4c4"/></svg>
<span style="left:437.90px;top:106.72px;font-size:7.3px;color:#2e2e2e;letter-spacing:-0.549px;font-weight:bold;">Name</span>
<span style="left:481.20px;top:106.72px;font-size:7.3px;color:#2e2e2e;letter-spacing:-0.333px;font-weight:bold;">Alar</span>
<span style="left:481.20px;top:116.02px;font-size:7.3px;color:#2e2e2e;letter-spacing:-0.700px;font-weight:bold;">ms</span>
<span style="left:510.00px;top:106.72px;font-size:7.3px;color:#2e2e2e;letter-spacing:-0.379px;font-weight:bold;">Devi</span>
<span style="left:510.00px;top:116.02px;font-size:7.3px;color:#2e2e2e;letter-spacing:-0.616px;font-weight:bold;">ces</span>
<span style="left:538.50px;top:106.72px;font-size:7.3px;color:#2e2e2e;letter-spacing:-0.507px;font-weight:bold;">Problematic</span>
<span style="left:538.50px;top:116.02px;font-size:7.3px;color:#2e2e2e;letter-spacing:-0.481px;font-weight:bold;">Devices</span>
<div style="left:418.4px;top:128.6px;width:185.4px;height:0.8px;background:#eeeeee;"></div>
<div style="left:418.4px;top:150.29999999999998px;width:185.4px;height:0.8px;background:#eeeeee;"></div>
<div style="left:418.4px;top:172.0px;width:185.4px;height:0.8px;background:#eeeeee;"></div>
<div style="left:418.4px;top:194.0px;width:185.4px;height:0.8px;background:#eeeeee;"></div>
<div style="left:418.4px;top:215.4px;width:185.4px;height:0.8px;background:#eeeeee;"></div>
<div style="left:418.4px;top:237.0px;width:185.4px;height:0.8px;background:#eeeeee;"></div>
<div style="left:418.4px;top:269.20000000000005px;width:185.4px;height:0.8px;background:#eeeeee;"></div>
<div style="left:418.4px;top:300.0px;width:185.4px;height:0.8px;background:#eeeeee;"></div>
<div style="left:418.4px;top:341.40000000000003px;width:185.4px;height:0.8px;background:#eeeeee;"></div>
<div style="left:418.4px;top:363.6px;width:185.4px;height:0.8px;background:#eeeeee;"></div>
<div style="left:418.4px;top:385.40000000000003px;width:185.4px;height:0.8px;background:#eeeeee;"></div>
<div style="left:418.4px;top:407.1px;width:185.4px;height:0.8px;background:#eeeeee;"></div>
<div style="left:418.4px;top:428.90000000000003px;width:185.4px;height:0.8px;background:#eeeeee;"></div>
<div style="left:418.4px;top:450.6px;width:185.4px;height:0.8px;background:#eeeeee;"></div>
<div style="left:418.4px;top:472.90000000000003px;width:185.4px;height:0.8px;background:#eeeeee;"></div>
<div style="left:418.4px;top:494.6px;width:185.4px;height:0.8px;background:#eeeeee;"></div>
<div style="left:418.4px;top:516.4px;width:185.4px;height:0.8px;background:#eeeeee;"></div>
<div style="left:418.4px;top:538.6px;width:185.4px;height:0.8px;background:#eeeeee;"></div>
<div style="left:418.4px;top:569.9px;width:185.4px;height:0.8px;background:#eeeeee;"></div>
<svg style="left:423.25px;top:135.75px" width="9.1" height="9.1" viewBox="0 0 9.100 9.100"><circle cx="4.550" cy="4.550" r="4.550" fill="#e35f5f"/><path d="M3 3 L6.100 6.100 M6.100 3 L3 6.100" stroke="#fff" stroke-width="1.25" stroke-linecap="round"/></svg>
<span style="left:437.90px;top:136.22px;font-size:7.3px;color:#2a2a2a;letter-spacing:-0.336px;">Server</span>
<span style="left:481.20px;top:136.22px;font-size:7.3px;color:#2a2a2a;letter-spacing:0.000px;">215</span>
<span style="left:510.00px;top:136.22px;font-size:7.3px;color:#2a2a2a;letter-spacing:0.000px;">20</span>
<span style="left:538.50px;top:136.22px;font-size:7.3px;color:#2a2a2a;letter-spacing:0.000px;">7</span>
<svg style="left:423.25px;top:157.35px" width="9.1" height="9.1" viewBox="0 0 9.100 9.100"><circle cx="4.550" cy="4.550" r="4.550" fill="#e35f5f"/><path d="M3 3 L6.100 6.100 M6.100 3 L3 6.100" stroke="#fff" stroke-width="1.25" stroke-linecap="round"/></svg>
<span style="left:437.90px;top:157.82px;font-size:7.3px;color:#2a2a2a;letter-spacing:-0.334px;">Router</span>
<span style="left:481.20px;top:157.82px;font-size:7.3px;color:#2a2a2a;letter-spacing:0.000px;">2</span>
<span style="left:510.00px;top:157.82px;font-size:7.3px;color:#2a2a2a;letter-spacing:0.000px;">2</span>
<span style="left:538.50px;top:157.82px;font-size:7.3px;color:#2a2a2a;letter-spacing:0.000px;">2</span>
<svg style="left:423.25px;top:179.25px" width="9.1" height="9.1" viewBox="0 0 9.100 9.100"><circle cx="4.550" cy="4.550" r="4.550" fill="#e35f5f"/><path d="M3 3 L6.100 6.100 M6.100 3 L3 6.100" stroke="#fff" stroke-width="1.25" stroke-linecap="round"/></svg>
<span style="left:437.90px;top:179.72px;font-size:7.3px;color:#2a2a2a;letter-spacing:-0.336px;">Switch</span>
<span style="left:481.20px;top:179.72px;font-size:7.3px;color:#2a2a2a;letter-spacing:0.000px;">1</span>
<span style="left:510.00px;top:179.72px;font-size:7.3px;color:#2a2a2a;letter-spacing:0.000px;">2</span>
<span style="left:538.50px;top:179.72px;font-size:7.3px;color:#2a2a2a;letter-spacing:0.000px;">1</span>
<svg style="left:423.25px;top:201.05px" width="9.1" height="9.1" viewBox="0 0 9.100 9.100"><circle cx="4.550" cy="4.550" r="4.550" fill="#eeab5c"/><path d="M3.700 2.500 V6.600 M5.400 2.500 V6.600" stroke="#fff" stroke-width="0.9" stroke-linecap="round"/></svg>
<span style="left:437.90px;top:201.52px;font-size:7.3px;color:#2a2a2a;letter-spacing:-0.377px;">Desktop</span>
<span style="left:481.20px;top:201.52px;font-size:7.3px;color:#2a2a2a;letter-spacing:0.000px;">8</span>
<span style="left:510.00px;top:201.52px;font-size:7.3px;color:#2a2a2a;letter-spacing:0.000px;">3</span>
<span style="left:538.50px;top:201.52px;font-size:7.3px;color:#2a2a2a;letter-spacing:0.000px;">2</span>
<svg style="left:423.25px;top:222.75px" width="9.1" height="9.1" viewBox="0 0 9.100 9.100"><circle cx="4.550" cy="4.550" r="4.550" fill="#55b574"/><path d="M2.600 4.700 L4 6.100 L6.600 3.300" stroke="#fff" stroke-width="1.25" fill="none" stroke-linecap="round" stroke-linejoin="round"/></svg>
<span style="left:437.90px;top:223.22px;font-size:7.3px;color:#2a2a2a;letter-spacing:-0.319px;">Firewall</span>
<span style="left:481.20px;top:223.22px;font-size:7.3px;color:#2a2a2a;letter-spacing:0.000px;">0</span>
<span style="left:510.00px;top:223.22px;font-size:7.3px;color:#2a2a2a;letter-spacing:0.000px;">0</span>
<span style="left:538.50px;top:223.22px;font-size:7.3px;color:#2a2a2a;letter-spacing:0.000px;">0</span>
<svg style="left:423.25px;top:249.45px" width="9.1" height="9.1" viewBox="0 0 9.100 9.100"><circle cx="4.550" cy="4.550" r="4.550" fill="#e35f5f"/><path d="M3 3 L6.100 6.100 M6.100 3 L3 6.100" stroke="#fff" stroke-width="1.25" stroke-linecap="round"/></svg>
<span style="left:437.90px;top:244.82px;font-size:7.3px;color:#2a2a2a;letter-spacing:-0.349px;">DomainCo</span>
<span style="left:437.90px;top:255.02px;font-size:7.3px;color:#2a2a2a;letter-spacing:-0.363px;">ntroller</span>
<span style="left:481.20px;top:249.92px;font-size:7.3px;color:#2a2a2a;letter-spacing:0.000px;">49</span>
<span style="left:510.00px;top:249.92px;font-size:7.3px;color:#2a2a2a;letter-spacing:0.000px;">2</span>
<span style="left:538.50px;top:249.92px;font-size:7.3px;color:#2a2a2a;letter-spacing:0.000px;">2</span>
<svg style="left:423.25px;top:280.85px" width="9.1" height="9.1" viewBox="0 0 9.100 9.100"><circle cx="4.550" cy="4.550" r="4.550" fill="#55b574"/><path d="M2.600 4.700 L4 6.100 L6.600 3.300" stroke="#fff" stroke-width="1.25" fill="none" stroke-linecap="round" stroke-linejoin="round"/></svg>
<span style="left:437.90px;top:276.22px;font-size:7.3px;color:#2a2a2a;letter-spacing:-0.365px;">Load</span>
<span style="left:437.90px;top:286.42px;font-size:7.3px;color:#2a2a2a;letter-spacing:-0.371px;">Balancer</span>
<span style="left:481.20px;top:281.32px;font-size:7.3px;color:#2a2a2a;letter-spacing:0.000px;">0</span>
<span style="left:510.00px;top:281.32px;font-size:7.3px;color:#2a2a2a;letter-spacing:0.000px;">0</span>
<span style="left:538.50px;top:281.32px;font-size:7.3px;color:#2a2a2a;letter-spacing:0.000px;">0</span>
<svg style="left:423.25px;top:317.15px" width="9.1" height="9.1" viewBox="0 0 9.100 9.100"><circle cx="4.550" cy="4.550" r="4.550" fill="#55b574"/><path d="M2.600 4.700 L4 6.100 L6.600 3.300" stroke="#fff" stroke-width="1.25" fill="none" stroke-linecap="round" stroke-linejoin="round"/></svg>
<span style="left:437.90px;top:307.42px;font-size:7.3px;color:#2a2a2a;letter-spacing:0.260px;">WAN</span>
<span style="left:437.90px;top:317.62px;font-size:7.3px;color:#2a2a2a;letter-spacing:-0.353px;">Accelerat</span>
<span style="left:437.90px;top:327.82px;font-size:7.3px;color:#2a2a2a;letter-spacing:-0.422px;">or</span>
<span style="left:481.20px;top:317.62px;font-size:7.3px;color:#2a2a2a;letter-spacing:0.000px;">0</span>
<span style="left:510.00px;top:317.62px;font-size:7.3px;color:#2a2a2a;letter-spacing:0.000px;">0</span>
<span style="left:538.50px;top:317.62px;font-size:7.3px;color:#2a2a2a;letter-spacing:0.000px;">0</span>
<svg style="left:423.25px;top:348.65px" width="9.1" height="9.1" viewBox="0 0 9.100 9.100"><circle cx="4.550" cy="4.550" r="4.550" fill="#55b574"/><path d="M2.600 4.700 L4 6.100 L6.600 3.300" stroke="#fff" stroke-width="1.25" fill="none" stroke-linecap="round" stroke-linejoin="round"/></svg>
<span style="left:437.90px;top:349.12px;font-size:7.3px;color:#2a2a2a;letter-spacing:-0.317px;">Wireless</span>
<span style="left:481.20px;top:349.12px;font-size:7.3px;color:#2a2a2a;letter-spacing:0.000px;">0</span>
<span style="left:510.00px;top:349.12px;font-size:7.3px;color:#2a2a2a;letter-spacing:0.000px;">0</span>
<span style="left:538.50px;top:349.12px;font-size:7.3px;color:#2a2a2a;letter-spacing:0.000px;">0</span>
<svg style="left:423.25px;top:370.35px" width="9.1" height="9.1" viewBox="0 0 9.100 9.100"><circle cx="4.550" cy="4.550" r="4.550" fill="#55b574"/><path d="M2.600 4.700 L4 6.100 L6.600 3.300" stroke="#fff" stroke-width="1.25" fill="none" stroke-linecap="round" stroke-linejoin="round"/></svg>
<span style="left:437.90px;top:370.82px;font-size:7.3px;color:#2a2a2a;letter-spacing:0.150px;">UPS</span>
<span style="left:481.20px;top:370.82px;font-size:7.3px;color:#2a2a2a;letter-spacing:0.000px;">0</span>
<span style="left:510.00px;top:370.82px;font-size:7.3px;color:#2a2a2a;letter-spacing:0.000px;">0</span>
<span style="left:538.50px;top:370.82px;font-size:7.3px;color:#2a2a2a;letter-spacing:0.000px;">0</span>
<svg style="left:423.25px;top:392.15px" width="9.1" height="9.1" viewBox="0 0 9.100 9.100"><circle cx="4.550" cy="4.550" r="4.550" fill="#55b574"/><path d="M2.600 4.700 L4 6.100 L6.600 3.300" stroke="#fff" stroke-width="1.25" fill="none" stroke-linecap="round" stroke-linejoin="round"/></svg>
<span style="left:437.90px;top:392.62px;font-size:7.3px;color:#2a2a2a;letter-spacing:-0.288px;">Printer</span>
<span style="left:481.20px;top:392.62px;font-size:7.3px;color:#2a2a2a;letter-spacing:0.000px;">0</span>
<span style="left:510.00px;top:392.62px;font-size:7.3px;color:#2a2a2a;letter-spacing:0.000px;">1</span>
<span style="left:538.50px;top:392.62px;font-size:7.3px;color:#2a2a2a;letter-spacing:0.000px;">0</span>
<svg style="left:423.25px;top:414.35px" width="9.1" height="9.1" viewBox="0 0 9.100 9.100"><circle cx="4.550" cy="4.550" r="4.550" fill="#55b574"/><path d="M2.600 4.700 L4 6.100 L6.600 3.300" stroke="#fff" stroke-width="1.25" fill="none" stroke-linecap="round" stroke-linejoin="round"/></svg>
<span style="left:437.90px;top:414.82px;font-size:7.3px;color:#2a2a2a;letter-spacing:-0.445px;">Unknown</span>
<span style="left:481.20px;top:414.82px;font-size:7.3px;color:#2a2a2a;letter-spacing:0.000px;">0</span>
<span style="left:510.00px;top:414.82px;font-size:7.3px;color:#2a2a2a;letter-spacing:0.000px;">3</span>
<span style="left:538.50px;top:414.82px;font-size:7.3px;color:#2a2a2a;letter-spacing:0.000px;">0</span>
<svg style="left:423.25px;top:436.15px" width="9.1" height="9.1" viewBox="0 0 9.100 9.100"><circle cx="4.550" cy="4.550" r="4.550" fill="#55b574"/><path d="M2.600 4.700 L4 6.100 L6.600 3.300" stroke="#fff" stroke-width="1.25" fill="none" stroke-linecap="round" stroke-linejoin="round"/></svg>
<span style="left:437.90px;top:436.62px;font-size:7.3px;color:#2a2a2a;letter-spacing:-0.363px;">Storage</span>
<span style="left:481.20px;top:436.62px;font-size:7.3px;color:#2a2a2a;letter-spacing:0.000px;">0</span>
<span style="left:510.00px;top:436.62px;font-size:7.3px;color:#2a2a2a;letter-spacing:0.000px;">0</span>
<span style="left:538.50px;top:436.62px;font-size:7.3px;color:#2a2a2a;letter-spacing:0.000px;">0</span>
<svg style="left:423.25px;top:457.95px" width="9.1" height="9.1" viewBox="0 0 9.100 9.100"><circle cx="4.550" cy="4.550" r="4.550" fill="#55b574"/><path d="M2.600 4.700 L4 6.100 L6.600 3.300" stroke="#fff" stroke-width="1.25" fill="none" stroke-linecap="round" stroke-linejoin="round"/></svg>
<span style="left:437.90px;top:458.42px;font-size:7.3px;color:#2a2a2a;letter-spacing:0.154px;">PDU</span>
<span style="left:481.20px;top:458.42px;font-size:7.3px;color:#2a2a2a;letter-spacing:0.000px;">0</span>
<span style="left:510.00px;top:458.42px;font-size:7.3px;color:#2a2a2a;letter-spacing:0.000px;">0</span>
<span style="left:538.50px;top:458.42px;font-size:7.3px;color:#2a2a2a;letter-spacing:0.000px;">0</span>
<svg style="left:423.25px;top:479.65px" width="9.1" height="9.1" viewBox="0 0 9.100 9.100"><circle cx="4.550" cy="4.550" r="4.550" fill="#55b574"/><path d="M2.600 4.700 L4 6.100 L6.600 3.300" stroke="#fff" stroke-width="1.25" fill="none" stroke-linecap="round" stroke-linejoin="round"/></svg>
<span style="left:437.90px;top:480.12px;font-size:7.3px;color:#2a2a2a;letter-spacing:0.154px;">UCS</span>
<span style="left:481.20px;top:480.12px;font-size:7.3px;color:#2a2a2a;letter-spacing:0.000px;">0</span>
<span style="left:510.00px;top:480.12px;font-size:7.3px;color:#2a2a2a;letter-spacing:0.000px;">0</span>
<span style="left:538.50px;top:480.12px;font-size:7.3px;color:#2a2a2a;letter-spacing:0.000px;">0</span>
<svg style="left:423.25px;top:501.45px" width="9.1" height="9.1" viewBox="0 0 9.100 9.100"><circle cx="4.550" cy="4.550" r="4.550" fill="#55b574"/><path d="M2.600 4.700 L4 6.100 L6.600 3.300" stroke="#fff" stroke-width="1.25" fill="none" stroke-linecap="round" stroke-linejoin="round"/></svg>
<span style="left:437.90px;top:501.92px;font-size:7.3px;color:#2a2a2a;letter-spacing:0.131px;">RAID</span>
<span style="left:481.20px;top:501.92px;font-size:7.3px;color:#2a2a2a;letter-spacing:0.000px;">0</span>
<span style="left:510.00px;top:501.92px;font-size:7.3px;color:#2a2a2a;letter-spacing:0.000px;">0</span>
<span style="left:538.50px;top:501.92px;font-size:7.3px;color:#2a2a2a;letter-spacing:0.000px;">0</span>
<svg style="left:423.25px;top:523.65px" width="9.1" height="9.1" viewBox="0 0 9.100 9.100"><circle cx="4.550" cy="4.550" r="4.550" fill="#55b574"/><path d="M2.600 4.700 L4 6.100 L6.600 3.300" stroke="#fff" stroke-width="1.25" fill="none" stroke-linecap="round" stroke-linejoin="round"/></svg>
<span style="left:437.90px;top:524.12px;font-size:7.3px;color:#2a2a2a;letter-spacing:-0.216px;">FCSwitch</span>
<span style="left:481.20px;top:524.12px;font-size:7.3px;color:#2a2a2a;letter-spacing:0.000px;">0</span>
<span style="left:510.00px;top:524.12px;font-size:7.3px;color:#2a2a2a;letter-spacing:0.000px;">0</span>
<span style="left:538.50px;top:524.12px;font-size:7.3px;color:#2a2a2a;letter-spacing:0.000px;">0</span>
<svg style="left:423.25px;top:550.45px" width="9.1" height="9.1" viewBox="0 0 9.100 9.100"><circle cx="4.550" cy="4.550" r="4.550" fill="#55b574"/><path d="M2.600 4.700 L4 6.100 L6.600 3.300" stroke="#fff" stroke-width="1.25" fill="none" stroke-linecap="round" stroke-linejoin="round"/></svg>
<span style="left:437.90px;top:545.82px;font-size:7.3px;color:#2a2a2a;letter-spacing:-0.242px;">TapeLibrar</span>
<span style="left:437.90px;top:556.02px;font-size:7.3px;color:#2a2a2a;letter-spacing:-0.474px;">y</span>
<span style="left:481.20px;top:550.92px;font-size:7.3px;color:#2a2a2a;letter-spacing:0.000px;">0</span>
<span style="left:510.00px;top:550.92px;font-size:7.3px;color:#2a2a2a;letter-spacing:0.000px;">0</span>
<span style="left:538.50px;top:550.92px;font-size:7.3px;color:#2a2a2a;letter-spacing:0.000px;">0</span>
<svg style="left:423.25px;top:577.15px" width="9.1" height="9.1" viewBox="0 0 9.100 9.100"><circle cx="4.550" cy="4.550" r="4.550" fill="#55b574"/><path d="M2.600 4.700 L4 6.100 L6.600 3.300" stroke="#fff" stroke-width="1.25" fill="none" stroke-linecap="round" stroke-linejoin="round"/></svg>
<span style="left:437.90px;top:577.62px;font-size:7.3px;color:#2a2a2a;letter-spacing:-0.009px;">URLs</span>
<span style="left:481.20px;top:577.62px;font-size:7.3px;color:#2a2a2a;letter-spacing:0.000px;">0</span>
<span style="left:510.00px;top:577.62px;font-size:7.3px;color:#2a2a2a;letter-spacing:0.000px;">0</span>
<span style="left:538.50px;top:577.62px;font-size:7.3px;color:#2a2a2a;letter-spacing:0.000px;">0</span>
<svg style="left:820px;top:100px" width="199" height="170" viewBox="820 100 199 170"><circle cx="919.5" cy="185.8" r="57.9" fill="none" stroke="#e8645f" stroke-width="17.8"/><path d="M919.50 243.70 A57.9 57.9 0 0 1 882.75 230.54" fill="none" stroke="#e6db6c" stroke-width="17.8"/><path d="M919.50 234.80 L919.50 252.60" stroke="#fff" stroke-opacity="0.45" stroke-width="0.5"/><path d="M888.40 223.66 L877.10 237.42" stroke="#fff" stroke-opacity="0.45" stroke-width="0.5"/><g fill="none" stroke="#1c1c1c" stroke-width="1.3" stroke-linecap="round" stroke-linejoin="round"><path d="M919.6 152.1 V153.4 M914.3000000000001 166 V160.3 C914.3000000000001 151.3 924.9 151.3 924.9 160.3 V166 C924.9 168.300 925.8000000000001 169.200 927.0 170.5 H912.2 C913.4 169.200 914.3000000000001 168.300 914.3000000000001 166 Z"/><path d="M918.7 172.5 H920.5"/><path d="M910.1 151.2 L912.7 153.6 M906.7 157.500 L910.6 158.4 M906.7 164.600 L910.6 163.2 M929.1 151.2 L926.5 153.6 M932.5 157.500 L928.6 158.4 M932.5 164.600 L928.6 163.2"/></g></svg>
<span style="left:910.30px;top:177.7px;font-size:18px;color:#222;letter-spacing:-0.010px;">10</span>
<span style="left:906.90px;top:198px;font-size:9.4px;color:#222;letter-spacing:0.151px;">Alarm</span>
<div style="left:826.4px;top:282.4px;width:185.2px;height:19.6px;background:#fafafa;"></div>
<span style="left:830.00px;top:288.8px;font-size:7.3px;color:#333;letter-spacing:-0.223px;font-weight:bold;">Device Name</span>
<svg style="left:875px;top:290.5px" width="4" height="4" viewBox="0 0 4 4"><path d="M0.300 3 L2 0.6 L3.700 3z" fill="#bbb"/></svg>
<div style="left:830.6px;top:308.2px;width:2px;height:31.5px;background:#e8645f;opacity:0.8"></div>
<span style="left:836.40px;top:310.4px;font-size:7.2px;color:#262626;letter-spacing:-0.351px;font-weight:bold;">ID=2004 Source=Microsoft-Windows-Resource-Exha...</span>
<span style="left:836.40px;top:320.82px;font-size:7.3px;color:#666;letter-spacing:-0.383px;">Opm</span>
<div style="left:852.2px;top:320.59999999999997px;width:43.0px;height:8.2px;background:#c3c3c3;"></div>
<span style="left:836.40px;top:331.4px;font-size:7.3px;color:#666;letter-spacing:-0.292px;">21 Feb 2019 04:57:02 PM IST</span>
<div style="left:826.4px;top:344.7px;width:185.2px;height:0.8px;background:#eeeeee;"></div>
<div style="left:830.6px;top:351.4px;width:2px;height:31.5px;background:#e8645f;opacity:0.8"></div>
<span style="left:836.40px;top:353.59999999999997px;font-size:7.2px;color:#262626;letter-spacing:-0.313px;font-weight:bold;">ID=4625 Source=Microsoft-Windows-Security-Auditi...</span>
<span style="left:836.40px;top:364.02px;font-size:7.3px;color:#666;letter-spacing:-0.383px;">Opm</span>
<div style="left:852.2px;top:363.79999999999995px;width:45.39999999999998px;height:8.2px;background:#c3c3c3;"></div>
<span style="left:836.40px;top:374.59999999999997px;font-size:7.3px;color:#666;letter-spacing:-0.292px;">21 Feb 2019 04:56:34 PM IST</span>
<div style="left:826.4px;top:387.9px;width:185.2px;height:0.8px;background:#eeeeee;"></div>
<div style="left:830.6px;top:394.59999999999997px;width:2px;height:31.5px;background:#e8645f;opacity:0.8"></div>
<span style="left:836.40px;top:396.79999999999995px;font-size:7.2px;color:#262626;letter-spacing:-0.312px;font-weight:bold;">ID=1014 Source=Microsoft-Windows-DNS-Client Typ...</span>
<span style="left:836.40px;top:407.22px;font-size:7.3px;color:#666;letter-spacing:-0.383px;">Opm</span>
<div style="left:852.2px;top:406.99999999999994px;width:44.19999999999993px;height:8.2px;background:#c3c3c3;"></div>
<span style="left:836.40px;top:417.79999999999995px;font-size:7.3px;color:#666;letter-spacing:-0.292px;">21 Feb 2019 04:55:58 PM IST</span>
<div style="left:826.4px;top:431.09999999999997px;width:185.2px;height:0.8px;background:#eeeeee;"></div>
<div style="left:830.6px;top:437.8px;width:2px;height:31.5px;background:#e8645f;opacity:0.8"></div>
<span style="left:836.40px;top:440.0px;font-size:7.2px;color:#262626;letter-spacing:-0.392px;font-weight:bold;">ID=6002 Source=MSExchange Mid-Tier Storage Type=...</span>
<span style="left:836.40px;top:450.42px;font-size:7.3px;color:#666;letter-spacing:-0.383px;">Opm</span>
<div style="left:852.2px;top:450.2px;width:44.69999999999993px;height:8.2px;background:#c3c3c3;"></div>
<span style="left:836.40px;top:461.0px;font-size:7.3px;color:#666;letter-spacing:-0.292px;">21 Feb 2019 04:52:49 PM IST</span>
<div style="left:826.4px;top:474.3px;width:185.2px;height:0.8px;background:#eeeeee;"></div>
<div style="left:830.6px;top:481.0px;width:2px;height:31.5px;background:#e6db6c;opacity:0.8"></div>
<span style="left:836.40px;top:483.2px;font-size:7.2px;color:#262626;letter-spacing:-0.348px;font-weight:bold;">ID=700 Source=NTDS ISAM Type=3 Message=NTDS (...</span>
<span style="left:836.40px;top:493.62px;font-size:7.3px;color:#666;letter-spacing:-0.383px;">Opm</span>
<div style="left:852.2px;top:493.4px;width:46.299999999999955px;height:8.2px;background:#c3c3c3;"></div>
<span style="left:836.40px;top:504.2px;font-size:7.3px;color:#666;letter-spacing:-0.292px;">21 Feb 2019 04:43:34 PM IST</span>
<div style="left:826.4px;top:517.5px;width:185.2px;height:0.8px;background:#eeeeee;"></div>
<div style="left:830.6px;top:524.1999999999999px;width:2px;height:31.5px;background:#e8645f;opacity:0.8"></div>
<span style="left:836.40px;top:526.4px;font-size:7.2px;color:#262626;letter-spacing:-0.434px;font-weight:bold;">APM Plugin: Health is critical as the resource is not ava...</span>
<span style="left:836.40px;top:536.82px;font-size:7.3px;color:#666;letter-spacing:-0.003px;">HP D</span>
<div style="left:852.2px;top:536.6px;width:47.799999999999955px;height:8.2px;background:#c3c3c3;"></div>
<span style="left:836.40px;top:547.4px;font-size:7.3px;color:#666;letter-spacing:-0.272px;">21 Feb 2019 04:35:11 PM IST</span>
<div style="left:826.4px;top:560.6999999999999px;width:185.2px;height:0.8px;background:#eeeeee;"></div>
<div style="left:830.6px;top:567.4px;width:2px;height:31.5px;background:#e8645f;opacity:0.8"></div>
<span style="left:836.40px;top:569.6px;font-size:7.2px;color:#262626;letter-spacing:-0.471px;font-weight:bold;">ID=1010 Source=MSExchangeFastSearch Type=3 Mess...</span>
<span style="left:836.40px;top:580.02px;font-size:7.3px;color:#666;letter-spacing:-0.383px;">Opm</span>
<div style="left:852.2px;top:579.8000000000001px;width:43.799999999999955px;height:8.2px;background:#c3c3c3;"></div>
<span style="left:836.40px;top:590.6px;font-size:7.3px;color:#666;letter-spacing:-0.292px;">21 Feb 2019 04:33:02 PM IST</span>
<div style="left:826.4px;top:603.9px;width:185.2px;height:0.8px;background:#eeeeee;"></div>
<div style="left:826.4px;top:301.8px;width:185.2px;height:0.8px;background:#eeeeee;"></div>
<div style="left:944.1px;top:562px;width:28.8px;height:24px;background:#2a2a2a;"></div>
<div style="left:944.1px;top:562px;width:28.8px;height:1.6px;background:#050505;"></div>
<span style="left:949.70px;top:567.3px;font-size:9.8px;color:#b4b4b4;letter-spacing:0.600px;">286</span>
<span style="left:949.10px;top:577.6px;font-size:6.2px;color:#a0a0a0;letter-spacing:0.018px;">Alarms</span>
<div style="left:983.9px;top:562px;width:29.3px;height:24px;background:#5bb778;"></div>
<svg style="left:990.5px;top:567.5px" width="17" height="16" viewBox="0 0 17 16"><g fill="none" stroke="#b4e6c4" stroke-width="0.9" stroke-linejoin="round" stroke-linecap="round"><path d="M4.400 3.200 V2.200 Q4.400 0.900 5.700 0.900 H14.200 Q15.500 0.900 15.500 2.200 V8 Q15.500 9.300 14.200 9.300 H12.600"/><path d="M2.200 3.700 H10.800 Q12.100 3.700 12.100 5 V10.700 Q12.100 12 10.800 12 H5.800 L3.300 14.500 V12 H2.200 Q0.900 12 0.900 10.700 V5 Q0.900 3.700 2.200 3.700 Z"/></g><path d="M3.600 6.500 H9.400 V9.400 H3.600z" fill="#b4e6c4" opacity="0.75"/></svg>
</div></body></html>
